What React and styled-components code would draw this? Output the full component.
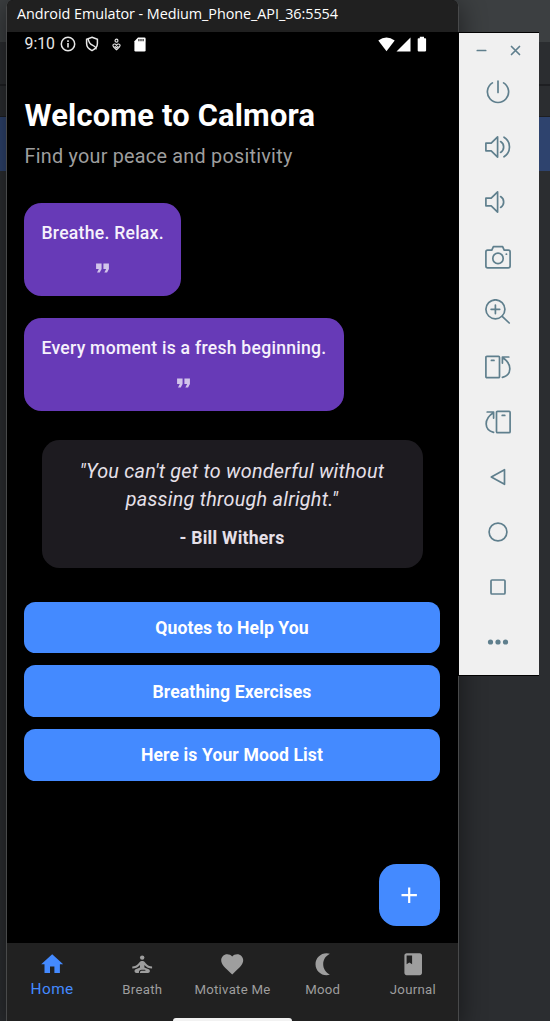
import React from "react";
import styled, { createGlobalStyle } from "styled-components";
import {
  MdHome,
  MdSelfImprovement,
  MdFavorite,
  MdBook,
  MdFormatQuote,
  MdAdd,
} from "react-icons/md";

const GlobalStyle = createGlobalStyle`
  * { box-sizing: border-box; }
  body { margin: 0; background: #2b2d30; overflow: hidden; }
`;

const Desktop = styled.div`
  display: flex;
  align-items: flex-start;
  width: 550px;
  height: 1021px;
  padding-left: 6px;
  overflow: hidden;
  font-family: Roboto, "Liberation Sans", sans-serif;
  background: linear-gradient(
    #3c3f41 0 42px,
    #2b2d30 42px 84px,
    #1e1f22 84px 86px,
    #2b2d30 86px 116px,
    #1e1f22 116px 117px,
    #2e436e 117px 171px,
    #2b2d30 171px
  );
`;

const Emulator = styled.section`
  position: relative;
  flex: none;
  display: flex;
  flex-direction: column;
  width: 453px;
  height: 1021px;
  background: #000;
  border-left: 1px solid #48494a;
  border-right: 1px solid #48494a;
  border-radius: 7px 7px 0 0;
  box-shadow: 0 6px 26px 2px rgba(0, 0, 0, 0.45);
`;

const WindowTitle = styled.header`
  flex: none;
  height: 32px;
  padding-left: 10px;
  border-radius: 6px 6px 0 0;
  background: #202020;
  color: #fff;
  font: 400 14.4px/28px "Open Sans", "Noto Sans", sans-serif;
  letter-spacing: -0.06px;
  white-space: nowrap;
`;

const StatusBar = styled.div`
  flex: none;
  display: flex;
  align-items: center;
  height: 24px;
  padding: 0 30px 0 17.5px;
  color: #e8e8e8;
`;

const Clock = styled.span`
  width: 35px;
  font-size: 15.8px;
  line-height: 24px;
  white-space: nowrap;
`;

const StatusIcons = styled.div`
  display: flex;
  align-items: center;
  gap: ${(p) => p.$gap}px;
  margin-left: ${(p) => p.$left};

  svg { display: block; }
`;

const Content = styled.main`
  flex: 1;
  display: flex;
  flex-direction: column;
  align-items: flex-start;
  padding: 41px 18px 0 17px;
`;

const Title = styled.h1`
  margin: 0;
  padding-left: 0.5px;
  color: #fff;
  font-size: 30.8px;
  font-weight: 700;
  line-height: 37px;
  letter-spacing: 0.22px;
  white-space: nowrap;
`;

const Subtitle = styled.p`
  margin: 11px 0 0;
  padding-left: 0.5px;
  color: #9e9e9e;
  font-size: 19.8px;
  line-height: 24px;
  letter-spacing: 0.25px;
  white-space: nowrap;
`;

const AffirmationCard = styled.article`
  display: flex;
  flex-direction: column;
  align-items: center;
  height: 92.5px;
  margin-top: ${(p) => p.$top}px;
  padding: 18px 17.5px 17px;
  gap: 10.5px;
  border-radius: 17.5px;
  background: #673ab7;
  color: rgba(255, 255, 255, 0.7);
`;

const AffirmationText = styled.span`
  color: #f6f1fc;
  font-size: 17.6px;
  font-weight: 500;
  line-height: 25px;
  letter-spacing: 0.25px;
  white-space: nowrap;
`;

const QuoteCard = styled.blockquote`
  align-self: stretch;
  height: 128px;
  margin: 29px 17.5px 0;
  padding: 18px 0 0;
  border-radius: 17.5px;
  background: #1d1b20;
  color: #e6e0e9;
  text-align: center;
`;

const QuoteText = styled.p`
  margin: 0;
  font-size: 19.8px;
  font-style: italic;
  line-height: 28.5px;
  letter-spacing: 0.25px;
`;

const QuoteAuthor = styled.footer`
  margin-top: 11px;
  font-size: 17.6px;
  font-weight: 700;
  line-height: 25px;
  letter-spacing: 0.25px;
`;

const Actions = styled.div`
  align-self: stretch;
  display: flex;
  flex-direction: column;
  gap: 12px;
  margin-top: 34px;
`;

const ActionButton = styled.button`
  height: 51.7px;
  padding: 1.5px 0 0;
  border: 0;
  border-radius: 11.5px;
  background: #448aff;
  color: #fff;
  font: 700 17.6px/24px Roboto, sans-serif;
  letter-spacing: 0.1px;
`;

const AddButton = styled.button`
  position: absolute;
  right: 18px;
  bottom: 95.5px;
  display: grid;
  place-items: center;
  width: 61.5px;
  height: 61.5px;
  padding: 0;
  border: 0;
  border-radius: 17.5px;
  background: #448aff;
  color: #fff;
`;

const BottomNav = styled.nav`
  flex: none;
  position: relative;
  display: grid;
  grid-template-columns: repeat(5, 1fr);
  height: 78px;
  padding-top: 8px;
  background: #212121;
`;

const NavItem = styled.a`
  display: flex;
  flex-direction: column;
  align-items: center;
  color: ${(p) => (p.$active ? "#448aff" : "#9e9e9e")};

  svg { display: block; }
`;

const NavLabel = styled.span`
  margin-top: ${(p) => (p.$active ? 2 : 3)}px;
  font-size: ${(p) => (p.$active ? 15.4 : 13.2)}px;
  line-height: 20px;
  letter-spacing: ${(p) => (p.$active ? 0.4 : 0.28)}px;
  white-space: nowrap;
`;

const GestureHandle = styled.span`
  position: absolute;
  left: 166px;
  bottom: 0;
  width: 119px;
  height: 3px;
  border-radius: 3px 3px 0 0;
  background: #f2f2f2;
`;

const Toolbar = styled.aside`
  position: relative;
  flex: none;
  width: 81px;
  height: 644px;
  margin: 32px 0 0 -1px;
  border: solid #020202;
  border-width: 1px 0 1px 1px;
  background: #f0f0f0;
  color: #5f7f8d;
`;

const WindowControls = styled.div`
  display: flex;
  justify-content: center;
  gap: 23px;
  height: 31.5px;
  padding: 12px 1px 0 0;
`;

const ToolButton = styled.div`
  display: grid;
  place-items: center;
  width: 78px;
  height: 55px;
`;

const lineProps = {
  fill: "none",
  stroke: "currentColor",
  strokeWidth: 1.7,
  strokeLinecap: "round",
  strokeLinejoin: "round",
};

const tools = [
  ["Power", <path d="M7.4 3.9A10.6 10.6 0 1 0 18.6 3.9M13 2v11.5" />],
  [
    "Volume up",
    <path d="M.9 9.2h5.3l6.4-6.3v20.2l-6.4-6.3H.9zM15.6 7.6a6.3 6.3 0 0 1 0 10.8M19 3.2a11.5 11.5 0 0 1 0 19.6" />,
  ],
  ["Volume down", <path d="M.9 9.2h5.3l6.4-6.3v20.2l-6.4-6.3H.9zM15.6 7.6a6.3 6.3 0 0 1 0 10.8" />],
  [
    "Screenshot",
    <>
      <path d="M2.6 6.2h4.2l1.6-3.6h9.2l1.6 3.6h4.2q1.7 0 1.7 1.9v13.8q0 1.9-1.9 1.9H2.6q-1.7 0-1.7-1.9V8.100q0-1.900 1.700-1.900z" />
      <circle cx="13" cy="14.4" r="5.2" />
      <path d="M21.3 10.2h.2" />
    </>,
  ],
  [
    "Zoom",
    <>
      <circle cx="10.4" cy="10.3" r="9.5" />
      <path d="M17.2 17.3l7 6.700M10.400 6v8.600M6.100 10.300h8.600" />
    </>,
  ],
  [
    "Rotate left",
    <>
      <rect x=".9" y="2.4" width="13.6" height="21.3" rx="1" />
      <path d="M6.4 6.4h2.6M17.4 23.4c9.6-2.5 10.2-13.3 0-19.9M17.4 9.1V3h6.4" />
    </>,
  ],
  [
    "Rotate right",
    <>
      <rect x="11.5" y="2.4" width="13.6" height="21.3" rx="1" />
      <path d="M17.2 6.4h2.6M8.6 23.4C-1 20.9-1.6 10.1 8.6 3.5M8.6 9.1V3H2.2" />
    </>,
  ],
  ["Back", <path d="M6.3 13l13.2-7.3v14.6z" />],
  ["Home", <circle cx="13" cy="13" r="8.9" />],
  ["Overview", <rect x="6" y="6" width="14" height="14" rx="1" />],
  [
    "More",
    <g fill="currentColor" stroke="none">
      <circle cx="5.5" cy="13" r="2.6" />
      <circle cx="13" cy="13" r="2.6" />
      <circle cx="20.5" cy="13" r="2.6" />
    </g>,
  ],
];

const MoonIcon = ({ size }) => (
  <svg width={size} height={size} viewBox="0 0 24 24" fill="currentColor">
    <path d="M15 22c1.1 0 2.100-.2 3.100-.6-3.900-2-6.100-5.400-6.100-9.400s2.200-7.400 6.100-9.400C17.100 2.200 16.100 2 15 2 9.500 2 5 6.500 5 12s4.500 10 10 10z" />
  </svg>
);

const navItems = [
  ["Home", MdHome],
  ["Breath", MdSelfImprovement],
  ["Motivate Me", MdFavorite],
  ["Mood", MoonIcon],
  ["Journal", MdBook],
];

const InfoIcon = () => (
  <svg width="16" height="16" viewBox="0 0 16 16" fill="none" stroke="currentColor" strokeWidth="1.5">
    <circle cx="8" cy="8" r="6.700" />
    <path d="M8 7v4.600M8 4.300v1.600" strokeWidth="1.600" />
  </svg>
);

const ShieldIcon = () => (
  <svg width="14" height="16" viewBox="0 0 14 16" fill="none" stroke="currentColor" strokeWidth="1.5">
    <path d="M7 1.300l5.400 2v4.300c0 3.300-2.200 5.600-5.400 7-3.200-1.400-5.400-3.700-5.400-7V3.300z" />
    <path d="M3.200 2.800q.6 4.600 4.600 6.600t3 4" strokeWidth="1.400" />
  </svg>
);

const WellbeingIcon = () => (
  <svg width="9" height="13" viewBox="0 0 10 14" fill="none" stroke="currentColor" strokeWidth="1.3">
    <circle cx="5" cy="2.700" r="1.600" />
    <path d="M5 7.800C3.600 5.700 1 6.200 1 8.200c0 1.700 2.200 3.100 4 4.600 1.800-1.500 4-2.900 4-4.600 0-2-2.600-2.500-4-.4zM3 8.900l2 1.600 2-1.600" />
  </svg>
);

const SdCardIcon = () => (
  <svg width="12" height="15" viewBox="0 0 12 15">
    <path d="M4 .5h6.400q1.200 0 1.200 1.200v11.600q0 1.200-1.200 1.200H1.600q-1.200 0-1.200-1.200V4.300z" fill="#fff" />
    <path d="M4.900 2v2.200M7 2v2.200M9.100 2v2.200" stroke="#222" strokeWidth="1.2" />
  </svg>
);

export default function App() {
  return (
    <>
      <GlobalStyle />
      <Desktop>
        <Emulator>
          <WindowTitle>Android Emulator - Medium_Phone_API_36:5554</WindowTitle>
          <StatusBar>
            <Clock>9:10</Clock>
            <StatusIcons $gap={0} $left="0">
              <InfoIcon />
              <StatusIcons $gap={13} $left="9px">
                <ShieldIcon />
                <WellbeingIcon />
                <SdCardIcon />
              </StatusIcons>
            </StatusIcons>
            <StatusIcons $gap={1} $left="auto">
              <svg width="17" height="15" viewBox="0 0 17 15" fill="#fff">
                <path d="M.3 3.600Q8.500-2.400 16.700 3.600L8.500 14.200z" />
              </svg>
              <svg width="15" height="15" viewBox="0 0 15 15" fill="#fff">
                <path d="M.5 14.500L14.500.5v14z" />
              </svg>
              <svg width="16" height="16" viewBox="0 0 16 16" fill="#fff">
                <path d="M6.500 2.200h1.300V.8h4.200v1.400h1.300q.8 0 .8.800v11.600q0 .8-.8.800H6.500q-.8 0-.8-.8V3q0-.8.8-.8z" />
              </svg>
            </StatusIcons>
          </StatusBar>
          <Content>
            <Title>Welcome to Calmora</Title>
            <Subtitle>Find your peace and positivity</Subtitle>
            <AffirmationCard $top={34}>
              <AffirmationText>Breathe. Relax.</AffirmationText>
              <MdFormatQuote size={23} />
            </AffirmationCard>
            <AffirmationCard $top={22.5}>
              <AffirmationText>Every moment is a fresh beginning.</AffirmationText>
              <MdFormatQuote size={23} />
            </AffirmationCard>
            <QuoteCard>
              <QuoteText>
                "You can't get to wonderful without
                <br />
                passing through alright."
              </QuoteText>
              <QuoteAuthor>- Bill Withers</QuoteAuthor>
            </QuoteCard>
            <Actions>
              <ActionButton>Quotes to Help You</ActionButton>
              <ActionButton>Breathing Exercises</ActionButton>
              <ActionButton>Here is Your Mood List</ActionButton>
            </Actions>
          </Content>
          <AddButton aria-label="Add">
            <MdAdd size={26.4} />
          </AddButton>
          <BottomNav>
            {navItems.map(([label, Icon], i) => (
              <NavItem key={label} $active={i === 0}>
                <Icon size={26.4} />
                <NavLabel $active={i === 0}>{label}</NavLabel>
              </NavItem>
            ))}
            <GestureHandle />
          </BottomNav>
        </Emulator>
        <Toolbar>
          <WindowControls>
            <svg width="11" height="11" viewBox="0 0 11 11" {...lineProps}>
              <path d="M1.300 5.500h8.400" />
            </svg>
            <svg width="11" height="11" viewBox="0 0 11 11" {...lineProps}>
              <path d="M1.500 1.500l8 8M9.500 1.500l-8 8" />
            </svg>
          </WindowControls>
          {tools.map(([name, drawing]) => (
            <ToolButton key={name}>
              <svg width="26" height="26" viewBox="0 0 26 26" {...lineProps}>
                {drawing}
              </svg>
            </ToolButton>
          ))}
        </Toolbar>
      </Desktop>
    </>
  );
}
